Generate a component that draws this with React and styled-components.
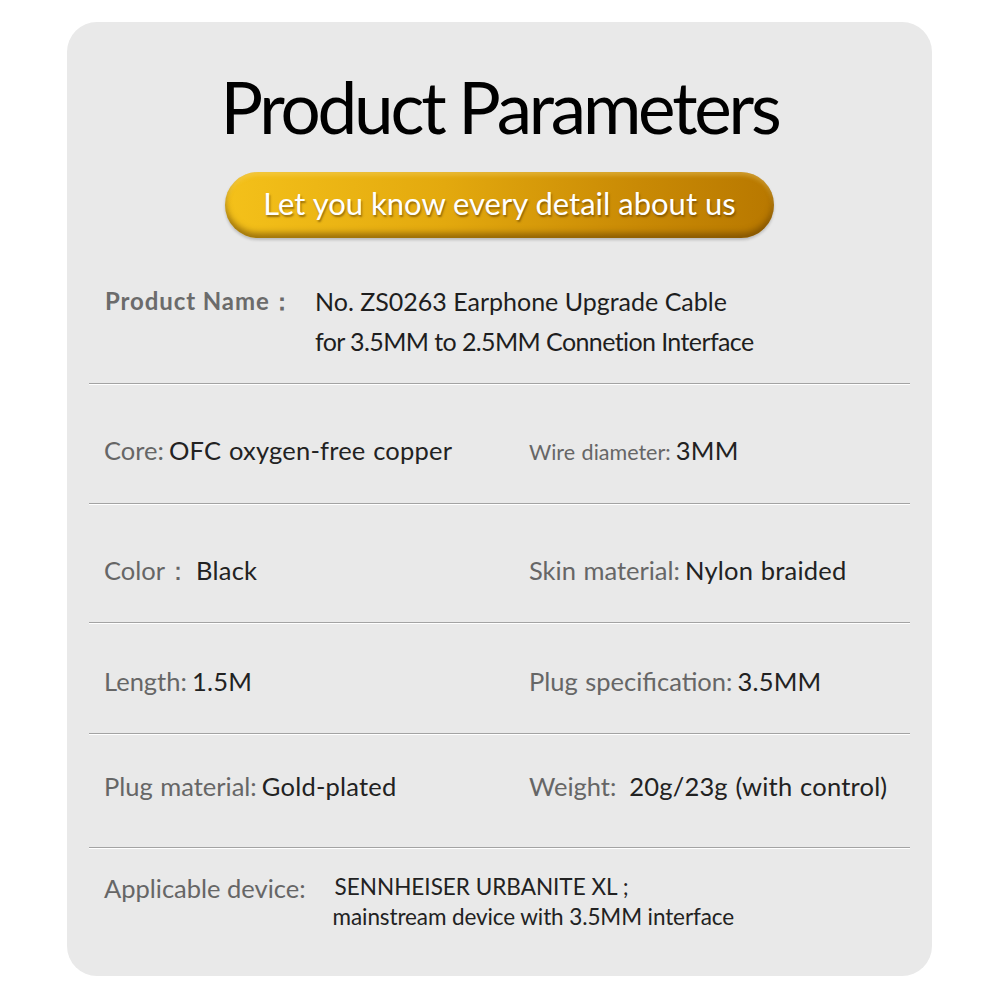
import styled, { createGlobalStyle } from 'styled-components';

const GlobalStyle = createGlobalStyle`
  html, body {
    margin: 0;
    padding: 0;
    background: #ffffff;
  }
  body {
    font-family: Lato, "Open Sans", sans-serif;
  }
`;

const rows = [
  {
    left: { label: 'Core:', value: 'OFC oxygen-free copper' },
    right: { label: 'Wire diameter:', value: '3MM', small: true },
    top: 48,
    bottom: 31,
  },
  {
    left: { label: 'Color：', value: 'Black' },
    right: { label: 'Skin material:', value: 'Nylon braided' },
    top: 48,
    bottom: 30,
  },
  {
    left: { label: 'Length:', value: '1.5M' },
    right: { label: 'Plug specification:', value: '3.5MM' },
    top: 40,
    bottom: 30,
  },
  {
    left: { label: 'Plug material:', value: 'Gold-plated' },
    right: { label: 'Weight:', value: ' 20g/23g (with control)' },
    top: 34,
    bottom: 39,
  },
];

export default function App() {
  return (
    <>
      <GlobalStyle />
      <Page>
        <Card>
          <Title>Product Parameters</Title>
          <Pill>
            <PillText>Let you know every detail about us</PillText>
          </Pill>

          <NameRow>
            <NameLabel>Product Name：</NameLabel>
            <NameValue>
              <span>No. ZS0263 Earphone Upgrade Cable</span>
              <NarrowLine>for 3.5MM to 2.5MM Connetion Interface</NarrowLine>
            </NameValue>
          </NameRow>
          <Divider />

          {rows.map((row, i) => (
            <div key={i}>
              <SpecRow $top={row.top} $bottom={row.bottom}>
                <Cell>
                  <Label>{row.left.label}</Label> <Value>{row.left.value}</Value>
                </Cell>
                <Cell>
                  <Label $small={row.right.small}>{row.right.label}</Label>{' '}
                  <Value>{row.right.value}</Value>
                </Cell>
              </SpecRow>
              <Divider />
            </div>
          ))}

          <DeviceRow>
            <Label>Applicable device:</Label>
            <DeviceValue>
              <span>SENNHEISER URBANITE XL ;</span>
              <span>mainstream device with 3.5MM interface</span>
            </DeviceValue>
          </DeviceRow>
        </Card>
      </Page>
    </>
  );
}

const Page = styled.main`
  width: 1000px;
  height: 1000px;
  padding: 22px 68px 24px 67px;
  box-sizing: border-box;
`;

const Card = styled.section`
  height: 100%;
  background: #e9e9e9;
  border-radius: 30px;
  padding: 0 22px;
  box-sizing: border-box;
  display: flex;
  flex-direction: column;
  align-items: stretch;
`;

const Title = styled.h1`
  margin: 45px 0 0 0;
  text-align: center;
  font-family: Lato, sans-serif;
  font-weight: 400;
  font-size: 71px;
  letter-spacing: -3.2px;
  line-height: 80px;
  color: #000;
`;

const Pill = styled.div`
  align-self: center;
  width: 549px;
  height: 66px;
  margin-top: 25px;
  border-radius: 33px;
  background: linear-gradient(90deg, #f4c11a 0%, #e3a90e 40%, #c98a05 75%, #b87800 100%);
  box-shadow: inset 0 -5px 6px rgba(90, 55, 0, 0.55), inset 0 3px 4px rgba(255, 230, 140, 0.35),
    0 2px 3px rgba(0, 0, 0, 0.2);
  display: flex;
  align-items: center;
  justify-content: center;
`;

const PillText = styled.span`
  color: #fff;
  font-family: Lato, sans-serif;
  font-size: 31px;
  line-height: 1;
  margin-top: -4px;
  text-shadow: 1px 2px 2px rgba(80, 50, 0, 0.55);
`;

const Divider = styled.hr`
  margin: 0;
  border: none;
  height: 1px;
  background: #a3a3a3;
  box-shadow: 0 1px 0 #ffffff;
`;

const NameRow = styled.div`
  display: flex;
  padding: 50px 0 29px 16px;
`;

const NameLabel = styled.span`
  width: 210px;
  flex: none;
  font-size: 24px;
  font-weight: 700;
  letter-spacing: 0.9px;
  color: #6b6b6b;
  line-height: 26px;
`;

const NameValue = styled.div`
  display: flex;
  flex-direction: column;
  gap: 14px;
  font-size: 25px;
  line-height: 26px;
  color: #1e1e1e;
`;

const NarrowLine = styled.span`
  letter-spacing: -0.6px;
`;

const SpecRow = styled.div`
  display: grid;
  grid-template-columns: 425px 1fr;
  padding: ${p => p.$top}px 0 ${p => p.$bottom}px 15px;
  line-height: 36px;
`;

const Cell = styled.div`
  white-space: pre;
  word-spacing: 1px;
`;

const Label = styled.span`
  font-size: ${p => (p.$small ? '21.5px' : '25.5px')};
  color: #666;
`;

const Value = styled.span`
  font-size: 25.5px;
  letter-spacing: 0.2px;
  color: #222;
`;

const DeviceRow = styled.div`
  display: flex;
  padding: 24px 0 0 15px;
  line-height: 32px;
`;

const DeviceValue = styled.div`
  display: flex;
  flex-direction: column;
  margin-left: 29px;
  font-size: 22.5px;
  line-height: 30px;
  color: #222;
  span:last-child {
    margin-left: -2px;
    letter-spacing: -0.1px;
  }
`;
